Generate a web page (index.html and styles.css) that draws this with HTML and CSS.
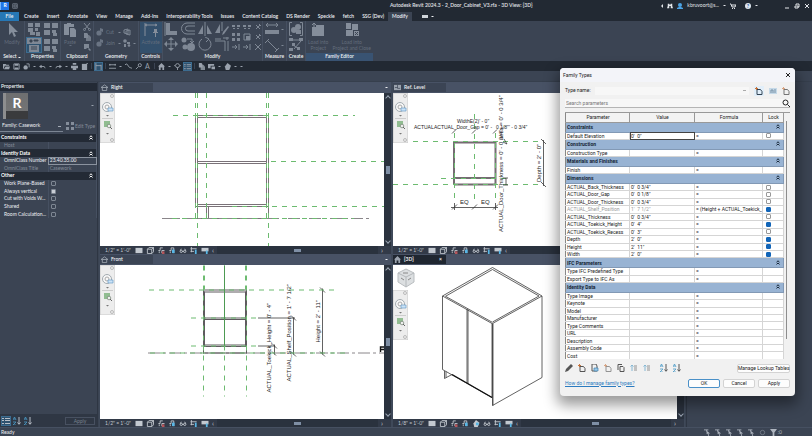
FILE: index.html
```html
<!DOCTYPE html>
<html lang="en">
<head>
<meta charset="utf-8">
<title>Autodesk Revit 2024.3</title>
<link rel="stylesheet" href="styles.css">
</head>
<body>
<svg class="sprite" aria-hidden="true">
  <symbol id="grid-a" viewBox="0 0 14 14"><path class="f" d="M1 1h5v4H1zM8 1h5v4H8zM1 6h5v4H1zM8 6h3v3H8zM3 10h5v3H3zM9 10h4v4H9z"/></symbol>
  <symbol id="grid-b" viewBox="0 0 14 14"><path class="f" d="M0 1h6v5H0zM8 1h6v5H8zM0 8h6v5H0zM8 8h4v3H8zM9 11h4v3H9z"/></symbol>
  <symbol id="props" viewBox="0 0 14 14"><path class="f" d="M0 0h14v6H0zM2 7h10v7H2z"/><path class="cut" d="M3 2h2v2H3zM7 2h4v1H7zM4 9h6M4 11h6"/></symbol>
  <symbol id="pointer" viewBox="0 0 14 14"><path class="f" d="M4 0v12l3-3 2 5 2-1-2-4h4z"/></symbol>
  <symbol id="paste" viewBox="0 0 14 14"><path class="f" d="M1 1h3V0h4v1h3v3H6v8H1zM7 5h4l2 2v7H7z"/></symbol>
  <symbol id="scissors" viewBox="0 0 8 8"><path class="s" d="M1 0l5 6M7 0L2 6"/><circle class="s" cx="1.500" cy="6.500" r="1"/><circle class="s" cx="6.500" cy="6.500" r="1"/></symbol>
  <symbol id="copy" viewBox="0 0 8 8"><path class="f" d="M1 0h3l1 1v4H1z"/><path class="f" d="M3 2h3l2 2v4H3z" opacity=".8"/></symbol>
  <symbol id="match" viewBox="0 0 8 8"><path class="f" d="M1 1h5v4H4L3 6H1zM6 5l2 2-1 1-2-2z"/></symbol>
  <symbol id="solids" viewBox="0 0 8 8"><circle class="f" cx="3" cy="5" r="2.600"/><path class="f" d="M4 0l3 1v3L4 3z"/></symbol>
  <symbol id="box" viewBox="0 0 8 8"><path class="s" d="M1 2l4-1v5L1 5zM3 3l4-1v5L3 6z"/></symbol>
  <symbol id="blobs" viewBox="0 0 8 8"><circle class="f" cx="2" cy="2" r="1.800"/><path class="f" d="M4 3h3v2H4zM1 5h2v3H1z"/><circle class="f" cx="6" cy="6.500" r="1.300"/></symbol>
  <symbol id="activate" viewBox="0 0 14 14"><path class="s" d="M1 0v13M1 2h12M3 1L1 2l2 1M11 1l2 1-2 1"/><path class="f" d="M10 6h3v3h1v1h-2v4h-1v-4H9V9h1z"/></symbol>
  <symbol id="align" viewBox="0 0 14 14"><path class="f" d="M2 1h4v8h7v4H2z"/><path class="s" d="M1 0v14"/></symbol>
  <symbol id="offset" viewBox="0 0 14 14"><path class="s" d="M14 1H6a5 5 0 0 0 0 11h8M14 4H7a2.500 2.500 0 0 0 0 5h7"/></symbol>
  <symbol id="mirror" viewBox="0 0 14 14"><path class="f" d="M5 3v9H0zM9 3v9h5z"/><path class="s" d="M7 0v14"/></symbol>
  <symbol id="mirror-draw" viewBox="0 0 14 14"><path class="f" d="M5 2v9H0zM8 10l5-6 1 1-5 7-2 1z"/><path class="s" d="M7 0v9"/></symbol>
  <symbol id="move" viewBox="0 0 14 14"><path class="s" d="M7 2v10M2 7h10"/><path class="f" d="M7 0l3 3H4zM7 14l3-3H4zM0 7l3-3v6zM14 7l-3-3v6z"/></symbol>
  <symbol id="copies" viewBox="0 0 14 14"><circle class="f" cx="3" cy="3" r="2.500"/><circle class="f" cx="4" cy="10" r="2.500"/><circle class="f" cx="10" cy="10" r="4"/><path class="s" d="M6 2h5v3M9 4l2 2 2-2"/></symbol>
  <symbol id="rotate" viewBox="0 0 14 14"><path class="s" d="M10 2a6 6 0 1 1-6 0M7 0l4 2-3 3"/></symbol>
  <symbol id="trim" viewBox="0 0 14 14"><path class="s" d="M0 4h10v10M0 2h6M13 4v10M12 0v3M8 1h6"/></symbol>
  <symbol id="split" viewBox="0 0 8 8"><path class="f" d="M0 2h3v2H0zM5 2h3v2H5zM1 5h2v1H1zM5 5h2v1H5z"/></symbol>
  <symbol id="array" viewBox="0 0 8 8"><path class="f" d="M0 0h3v3H0zM5 0h3v3H5zM0 5h3v3H0zM5 5h3v3H5z"/></symbol>
  <symbol id="scale" viewBox="0 0 8 8"><path class="s" d="M1 1h6v6H1z"/><path class="f" d="M3 3h4v4H3z"/></symbol>
  <symbol id="extend" viewBox="0 0 8 8"><path class="s" d="M0 4h5M7 1v6M3 2l2 2-2 2"/></symbol>
  <symbol id="pin" viewBox="0 0 8 8"><path class="s" d="M2 2l4 4M2 6l4-4M5 1l2 2"/></symbol>
  <symbol id="cross" viewBox="0 0 8 8"><path class="s" d="M1 1l6 6M7 1L1 7"/></symbol>
  <symbol id="ruler" viewBox="0 0 14 14"><path class="s" d="M1 2h12M3 0L1 2l2 2M11 0l2 2-2 2"/><path class="f" d="M0 7h14v4H0z"/></symbol>
  <symbol id="measure" viewBox="0 0 14 14"><path class="s" d="M3 2l9 9M0 4l4-4M10 13l4-4"/></symbol>
  <symbol id="group" viewBox="0 0 14 14"><path class="s" d="M3 .5H.5v13H3M11 .5h2.500v13H11"/><circle class="f" cx="5" cy="8" r="3"/><circle class="f" cx="9" cy="5" r="3"/><path class="f" d="M7 8h5v4H7z"/></symbol>
  <symbol id="assembly" viewBox="0 0 14 14"><path class="f" d="M0 1h4v3H0zM10 1h4v3h-4zM3 6h3v3H3zM0 11h4v3H0zM8 10h3v3H8z"/><path class="s" d="M4 3h6M12 4L5 12M4 8l6 4"/></symbol>
  <symbol id="load" viewBox="0 0 14 14"><path class="f" d="M1 4h4V2h8v11H1z"/><path class="s" d="M3 4V0M1 2l2-2 2 2"/></symbol>
  <symbol id="load-close" viewBox="0 0 14 14"><path class="f" d="M1 0h5v6H1zM7 1h6v6H7zM1 7h7v6H1zM9 8h5v5H9z"/><path class="cut" d="M10 9l3 3M13 9l-3 3"/></symbol>
  <symbol id="folder" viewBox="0 0 8 8"><path class="f" d="M0 1h3l1 1h3v1H2L1 6 0 7zM3 4h5L7 7H1z"/></symbol>
  <symbol id="save" viewBox="0 0 8 8"><path class="s" d="M1 1h6v6H1z"/><path class="f" d="M2 1h4v2H2zM2 5h4v2H2z"/></symbol>
  <symbol id="sync" viewBox="0 0 8 8"><circle class="f" cx="3" cy="5" r="2.500"/><path class="s" d="M4 1h3v4"/></symbol>
  <symbol id="window" viewBox="0 0 8 8"><path class="s" d="M1 1h6v6H1zM1 4h3M4 1v6M5 3h2M5 5h2"/></symbol>
  <symbol id="undo" viewBox="0 0 8 8"><path class="s" d="M2 4h4l1 2"/><path class="f" d="M0 4l3-2v4z"/></symbol>
  <symbol id="redo" viewBox="0 0 8 8"><path class="s" d="M6 4H2L1 6"/><path class="f" d="M8 4L5 2v4z"/></symbol>
  <symbol id="print" viewBox="0 0 8 8"><path class="f" d="M2 0h4v2H2zM0 3h8v3H0zM2 6h4v2H2z"/></symbol>
  <symbol id="sheet" viewBox="0 0 8 8"><path class="f" d="M1 1h6v7H1z"/><path class="s" d="M5 2l3-2"/></symbol>
  <symbol id="plan" viewBox="0 0 8 8"><path class="f" d="M0 1h8v6H0z"/><path d="M1 4h3M4 1v4M4 5h3" fill="none" stroke="#3b4454" stroke-width=".8"/></symbol>
  <symbol id="dimension" viewBox="0 0 8 8"><path class="s" d="M1 0v8M7 2v6M1 3h6"/></symbol>
  <symbol id="levels" viewBox="0 0 8 8"><path class="s" d="M0 2h8M0 6h8M1 1v2M7 1v2"/></symbol>
  <symbol id="zigzag" viewBox="0 0 8 8"><path class="s" d="M0 2l2-1 3 4 3 1"/></symbol>
  <symbol id="tag" viewBox="0 0 8 8"><circle class="s" cx="5.500" cy="2.500" r="1.800"/><path class="s" d="M4 4L1 7"/></symbol>
  <symbol id="house" viewBox="0 0 8 8"><path class="f" d="M4 0l4 4H7v4H5V5H3v3H1V4H0z"/></symbol>
  <symbol id="elevation" viewBox="0 0 8 8"><path class="s" d="M0 4h8L4 1zM1.500 4v3.500h5V4"/></symbol>
  <symbol id="section" viewBox="0 0 8 8"><circle class="s" cx="4" cy="3" r="2.300"/><path class="s" d="M4 5v3M0 3h1M7 3h1"/></symbol>
  <symbol id="list" viewBox="0 0 8 8"><path class="f" d="M0 1h2v1H0zM3 1h5v1H3zM0 3h2v1H0zM3 3h5v1H3zM0 6h2v1H0zM3 6h5v1H3z"/></symbol>
  <symbol id="sheetbox" viewBox="0 0 8 8"><path class="f" d="M0 1h8v6H0z"/></symbol>
  <symbol id="cube" viewBox="0 0 8 8"><path class="s" d="M1 2.500h5v5H1zM1 2.500L3 .5h5v5l-2 2M6 2.500l2-2"/></symbol>
  <symbol id="sun" viewBox="0 0 8 8"><path class="s" d="M1 4h2V1h3M2 7V5M5 7V4h3"/><path class="red" d="M5 5h3v3H5z"/></symbol>
  <symbol id="shadow" viewBox="0 0 8 8"><path class="s" d="M1 4h2V1h3v6M2 7V5"/><path class="blue" d="M4 3h3v4H4z"/></symbol>
  <symbol id="teapot" viewBox="0 0 8 8"><path class="f" d="M1 4l3-4 4 3-2 5H2z"/><path class="blue" d="M4 3h3v3H4z"/></symbol>
  <symbol id="render" viewBox="0 0 8 8"><path class="f" d="M1 4l3-4 4 3-2 5H2z"/></symbol>
  <symbol id="glasses" viewBox="0 0 8 8"><circle class="s" cx="2" cy="5" r="1.300"/><circle class="s" cx="6" cy="5" r="1.300"/><path class="s" d="M3 5h2M1 4l1-2M7 4L6 2"/></symbol>
  <symbol id="crop" viewBox="0 0 8 8"><path class="s" d="M1 0v6M0 2h7M0 5h4"/><path class="blue" d="M5 3h2v5H5z"/></symbol>
  <symbol id="reveal" viewBox="0 0 8 8"><path class="f" d="M0 1h8v4H0z"/><path class="blue" d="M5 4h2v4H5z"/></symbol>
  <symbol id="windows" viewBox="0 0 8 8"><path class="f" d="M0 1h7v2H3v3H0zM4 4h4v3H4z"/></symbol>
  <symbol id="chevrons" viewBox="0 0 4 5"><path class="s" d="M.5 2.200L2 .8l1.500 1.400M.5 4.400L2 3l1.500 1.400"/></symbol>
  <symbol id="newdoc" viewBox="0 0 8 8"><path class="s" d="M2 2.500h3.500l1.500 2v3H2z"/><path d="M0 1.500h3M1.500 0v3" fill="none" stroke="#c8743c"/></symbol>
  <symbol id="finder" viewBox="0 0 8 8"><path class="f" d="M1 1h2v1h2V1h2v3l1 3H5V4H3v3H0l1-3z"/></symbol>
  <symbol id="picker" viewBox="0 0 8 8"><path class="s" d="M0 1h5M3 1v2"/><path class="f" d="M3 2l4 3H5l1 3H5L4 5 3 6z"/></symbol>
  <symbol id="sort" viewBox="0 0 8 8"><path class="s" d="M6 0v7M4.500 5.500L6 7.300l1.500-1.800"/><path d="M0 3l1.500-3L3 3M.8 2h1.400M0 5h3L0 8h3" fill="none" stroke="#4a9ac8" stroke-width=".8"/></symbol>
  <symbol id="shift" viewBox="0 0 8 8"><path d="M2 1v6M.5 2.500L2 1l1.500 1.500" fill="none" stroke="#3f93c2"/><path class="s" d="M4 2h3M4 4h3M4 6h3"/></symbol>
  <symbol id="wheel" viewBox="0 0 15 50">
    <path d="M0 0h15v50H0z" fill="#ededed" stroke="#c9c9c9"/>
    <circle cx="12" cy="3" r="1.500" fill="none" stroke="#999" stroke-width=".6"/>
    <circle cx="7" cy="14" r="4.500" fill="#f8f8f8" stroke="#a3abb0"/>
    <circle cx="7" cy="14" r="2" fill="none" stroke="#aaa"/>
    <path d="M8 15h5v3H8z" fill="#cce3f7" stroke="#5d94c4" stroke-width=".6"/>
    <path d="M2 25.500h11" stroke="#ccc"/><path d="M6 22h3l-1.500 1.500zM6 40h3l-1.500 1.500z" fill="#777"/>
    <path d="M4 28h6v6H4z" fill="#91bd91"/><circle cx="9" cy="33" r="1.800" fill="#eee" stroke="#718071" stroke-width=".7"/><path d="M10 34l2 2" stroke="#666"/>
    <circle cx="12" cy="47" r="1.500" fill="none" stroke="#999" stroke-width=".6"/>
  </symbol>
</svg>

<header class="titlebar">
  <div class="brand"><span class="logo">R</span><svg class="i8"><use href="#window"/></svg></div>
  <h1>Autodesk Revit 2024.3 - 2_Door_Cabinet_V3.rfa - 3D View: {3D}</h1>
  <div class="account">
    <i class="caret left"></i><svg class="i6"><use href="#finder"/></svg>
    <svg class="i6 user" viewBox="0 0 6 6"><circle cx="3" cy="2" r="2"/><path d="M0 6V5l2-1h2l2 1v1z"/></svg>
    <span>kbruvoort@s...</span><i class="caret"></i>
    <svg class="i6" viewBox="0 0 6 6"><path class="s" d="M0 1h1l1 3h3l1-2H2"/><path class="f" d="M2 5h1v1H2zM4 5h1v1H4z"/></svg>
    <span class="help">?</span><i class="caret"></i>
  </div>
  <div class="winctl">
    <button aria-label="Minimize"><svg viewBox="0 0 6 6"><path d="M1 5h4"/></svg></button>
    <button aria-label="Restore"><svg viewBox="0 0 6 6"><path d="M1 3h3v2H1zM2 2V1h3v3H4"/></svg></button>
    <button aria-label="Close"><svg viewBox="0 0 6 6"><path d="M1 1l4 4M5 1L1 5"/></svg></button>
  </div>
</header>

<nav class="tabs">
  <a class="file" href="#">File</a><a href="#">Create</a><a href="#">Insert</a><a href="#">Annotate</a><a href="#">View</a><a href="#">Manage</a><a href="#">Add-Ins</a><a href="#">Interoperability Tools</a><a href="#">Issues</a><a href="#">Content Catalog</a><a href="#">DS Render</a><a href="#">Speckle</a><a href="#">fetch</a><a href="#">SSG (Dev)</a><a class="active" href="#">Modify</a>
  <span class="panel-toggle"></span><i class="caret"></i>
</nav>

<section class="ribbon">
  <div class="panel p-select"><div class="tools"><button class="big"><svg class="i14"><use href="#pointer"/></svg>Modify</button></div><h2>Select <i class="caret"></i></h2></div>
  <div class="panel p-props"><div class="tools quad"><svg class="i14"><use href="#grid-a"/></svg><svg class="i14"><use href="#grid-b"/></svg><svg class="i14 lit"><use href="#props"/></svg><svg class="i14"><use href="#grid-b"/></svg></div><h2>Properties</h2></div>
  <div class="panel p-clip"><div class="tools"><button class="big"><svg class="i14"><use href="#paste"/></svg>Paste<i class="caret"></i></button><div class="stack"><svg class="i8"><use href="#scissors"/></svg><svg class="i8"><use href="#copy"/></svg><svg class="i8"><use href="#match"/></svg></div></div><h2>Clipboard</h2></div>
  <div class="panel p-geom"><div class="tools geom">
    <button><svg class="i8"><use href="#solids"/></svg>Cut</button><i class="caret"></i><svg class="i8"><use href="#box"/></svg><span></span>
    <button><svg class="i8"><use href="#solids"/></svg>Join</button><i class="caret"></i><svg class="i8"><use href="#blobs"/></svg><i class="caret"></i>
  </div><h2>Geometry</h2></div>
  <div class="panel p-ctrl"><div class="tools"><button class="big on"><svg class="i14"><use href="#activate"/></svg>Activate</button></div><h2>Controls</h2></div>
  <div class="panel p-modify"><div class="tools"><div class="eight"><svg class="i14"><use href="#align"/></svg><svg class="i14"><use href="#offset"/></svg><svg class="i14"><use href="#mirror"/></svg><svg class="i14"><use href="#mirror-draw"/></svg><svg class="i14"><use href="#move"/></svg><svg class="i14"><use href="#copies"/></svg><svg class="i14"><use href="#rotate"/></svg><svg class="i14"><use href="#trim"/></svg></div>
    <div class="nine"><svg class="i8"><use href="#split"/></svg><svg class="i8"><use href="#split"/></svg><svg class="i8"><use href="#pin"/></svg><svg class="i8"><use href="#array"/></svg><svg class="i8"><use href="#scale"/></svg><svg class="i8"><use href="#pin"/></svg><svg class="i8"><use href="#extend"/></svg><svg class="i8"><use href="#extend"/></svg><svg class="i8"><use href="#cross"/></svg></div></div><h2>Modify</h2></div>
  <div class="panel p-measure"><div class="tools pairs"><svg class="i14"><use href="#ruler"/></svg><i class="caret"></i><svg class="i14"><use href="#measure"/></svg><i class="caret"></i></div><h2>Measure</h2></div>
  <div class="panel p-create"><div class="tools stack wide"><svg class="i14"><use href="#group"/></svg><svg class="i14"><use href="#assembly"/></svg></div><h2>Create</h2></div>
  <div class="panel p-family"><div class="tools"><button class="big"><svg class="i14"><use href="#load"/></svg>Load into<br>Project</button><button class="big"><svg class="i14"><use href="#load-close"/></svg>Load into<br>Project and Close</button></div><h2>Family Editor</h2></div>
</section>

<div class="quick">
  <svg class="i8"><use href="#folder"/></svg><svg class="i8"><use href="#save"/></svg><svg class="i8"><use href="#sync"/></svg><i class="caret"></i><svg class="i8"><use href="#undo"/></svg><i class="caret"></i><svg class="i8"><use href="#redo"/></svg><i class="caret"></i><svg class="i8"><use href="#print"/></svg><svg class="i8"><use href="#sheet"/></svg><span class="sep"></span><svg class="i8 lit"><use href="#dimension"/></svg><span class="sep"></span><svg class="i8"><use href="#levels"/></svg><i class="caret"></i><svg class="i8"><use href="#zigzag"/></svg><svg class="i8"><use href="#tag"/></svg><b>A</b><span class="sep"></span><svg class="i8"><use href="#house"/></svg><i class="caret"></i><svg class="i8"><use href="#section"/></svg><svg class="i8 lit"><use href="#list"/></svg><span class="sep"></span><svg class="i8"><use href="#copy"/></svg><svg class="i8"><use href="#windows"/></svg><i class="caret"></i><svg class="i8"><use href="#render"/></svg><i class="caret"></i><i class="caret"></i>
</div>
<div class="options"></div>

<main class="work">
  <aside class="props">
    <h2>Properties</h2>
    <div class="preview"><span class="family">R</span><i class="caret"></i></div>
    <div class="chooser">
      <select aria-label="Family"><option>Family: Casework</option></select>
      <button><svg class="i8"><use href="#array"/></svg>Edit Type</button>
    </div>
    <table>
      <tr class="g"><th colspan="2">Constraints<svg><use href="#chevrons"/></svg></th></tr>
      <tr class="dim"><td>Host</td><td></td></tr>
      <tr class="g"><th colspan="2">Identity Data<svg><use href="#chevrons"/></svg></th></tr>
      <tr><td>OmniClass Number</td><td class="edit">23.40.35.00</td></tr>
      <tr class="dim"><td>OmniClass Title</td><td>Casework</td></tr>
      <tr class="g"><th colspan="2">Other<svg><use href="#chevrons"/></svg></th></tr>
      <tr><td><label for="w1">Work Plane-Based</label></td><td><input type="checkbox" id="w1"></td></tr>
      <tr><td><label for="w2">Always vertical</label></td><td><input type="checkbox" id="w2" checked></td></tr>
      <tr><td><label for="w3">Cut with Voids W...</label></td><td><input type="checkbox" id="w3"></td></tr>
      <tr><td><label for="w4">Shared</label></td><td><input type="checkbox" id="w4"></td></tr>
      <tr><td><label for="w5">Room Calculation...</label></td><td><input type="checkbox" id="w5"></td></tr>
    </table>
    <div class="apply"><svg class="i8 lit"><use href="#list"/></svg><svg class="i8"><use href="#sort"/></svg><svg class="i8"><use href="#sort"/></svg><button disabled>Apply</button></div>
  </aside>

  <div class="views">
    <section class="view">
      <header><span class="tab"><svg class="i8"><use href="#elevation"/></svg>Right</span><i class="caret"></i></header>
      <div class="canvas">
        <svg class="draw" viewBox="100 93 284 153">
          <g class="gray"><path d="M195.500 115v92M197.500 117v101.500M266.500 117v89M268.500 115v103.500M195 115.500h74M197 117.500h70M198 161.500h69M198 163.500h69M197 204.500h70M195 206.500h74M206.500 207v11.500M208.500 207v11.500M197 218.500h72"/></g>
          <path class="gray ground" d="M162 218.500h208"/>
          <g class="ref"><path d="M195.500 93v125M197.500 93v153M206.500 93v125M266.500 93v125M268.500 93v153M173 115.500h182M271 161.500h113M232 206.500h152M172 218.500h182"/></g>
        </svg>
        <svg class="nav"><use href="#wheel"/></svg>
      </div>
      <div class="vscroll"></div>
      <footer><span>1/2" = 1'-0"</span><svg class="i8"><use href="#sheetbox"/></svg><svg class="i8"><use href="#cube"/></svg><svg class="i8"><use href="#sun"/></svg><svg class="i8"><use href="#shadow"/></svg><svg class="i8"><use href="#glasses"/></svg><svg class="i8"><use href="#crop"/></svg><svg class="i8"><use href="#reveal"/></svg><em>‹</em><div class="hscroll"></div><em>›</em></footer>
    </section>

    <section class="view">
      <header><span class="tab"><svg class="i8"><use href="#plan"/></svg>Ref. Level</span></header>
      <div class="canvas">
        <svg class="draw" viewBox="393 93 284 153">
          <g class="gray thick"><path d="M454 142v43M495.500 142v43M453 142.500h43.500M454 178h42M454 184.500h42"/></g>
          <g class="ref"><path d="M393 141.500h150M393 184.500h150M441 178.500h68M454.500 133v67M474.500 114v89M495.500 133v67"/></g>
          <g class="line"><path d="M451 207.500h47M452 209.500l5-5M472 209.500l5-5M493 209.500l5-5M454.500 203v7M495.500 203v7M452 133.500l4-4M472 133.500l4-4M493 133.500l4-4M543.500 140v46M541 139l5 5M541 182l5 5M503 142l4 2M504 139l3 5M503 178h5M503 185h5M506 178v7"/></g>
          <g class="note"><text class="small" x="457" y="123">WidthE(2)' - 0"</text><text class="small" x="414" y="129">ACTUAL</text><text class="small" x="434" y="129">ACTUAL_Door_Gap = 0' -</text><text class="small" x="496" y="129">0 1/8"' - 0 3/4"</text><text x="460" y="204">EQ</text><text x="481" y="204">EQ</text>
          <text transform="translate(503 232) rotate(-90)">ACTUAL_Door_Thickness = 0' - 0 3/4"</text><text transform="translate(503 140) rotate(-90)">ness = 0' - 0 3/4"</text><text transform="translate(541 182) rotate(-90)">Depth = 2' - 0"</text></g>
        </svg>
        <svg class="nav"><use href="#wheel"/></svg>
      </div>
      <div class="vscroll"></div>
      <footer><span>1/2" = 1'-0"</span><svg class="i8"><use href="#sheetbox"/></svg><svg class="i8"><use href="#cube"/></svg><svg class="i8"><use href="#sun"/></svg><svg class="i8"><use href="#shadow"/></svg><svg class="i8"><use href="#glasses"/></svg><svg class="i8"><use href="#crop"/></svg><svg class="i8"><use href="#reveal"/></svg><em>‹</em><div class="hscroll"></div><em>›</em></footer>
    </section>

    <div class="empty"></div>

    <section class="view">
      <header><span class="tab"><svg class="i8"><use href="#elevation"/></svg>Front</span><i class="caret"></i></header>
      <div class="canvas">
        <svg class="draw" viewBox="100 265 284 153">
          <path class="gray ground" d="M148 352.500h236"/>
          <g class="gray dark"><path d="M203.500 289v64M204.500 291v55M245.500 291v55M246.500 289v64M203 289.500h44M204 291.500h42M204 317.500h42M204 319h42M204 344.500h42M204 346h42M203 352.500h44"/></g>
          <g class="line"><path d="M224.500 290v55M258 317.500h37M258 345.500h17M274.500 344v10M293.500 317v37M322.500 288v66M272 343l5 5M272 351l4 4M291 315l5 5M291 351l5 5M320 287l5 5M320 351l5 5"/></g>
          <g class="ref"><path d="M203.500 265v131M204.500 265v24M224.500 265v131M245.500 265v24M246.500 265v131M149 289.500h187M191 317.500h67M191 345.500h67M150 352.500h200"/></g>
          <path class="ref solid" d="M224.500 265v80"/>
          <g class="note"><text transform="translate(271 392) rotate(-90)">ACTUAL_Toekick_Height = 0' - 4"</text><text transform="translate(291 381) rotate(-90)">ACTUAL_Shelf_Position = 1' - 7 1/2"</text><text transform="translate(320 342) rotate(-90)">Height = 2' - 11"</text></g>
          <path class="line bold" d="M384 346.500h-3.500v5M381 349h3"/>
        </svg>
        <svg class="nav"><use href="#wheel"/></svg>
      </div>
      <div class="vscroll"></div>
      <footer><span>1/2" = 1'-0"</span><svg class="i8"><use href="#sheetbox"/></svg><svg class="i8"><use href="#cube"/></svg><svg class="i8"><use href="#sun"/></svg><svg class="i8"><use href="#shadow"/></svg><svg class="i8"><use href="#glasses"/></svg><svg class="i8"><use href="#crop"/></svg><svg class="i8"><use href="#reveal"/></svg><em>‹</em><div class="hscroll"></div><em>›</em></footer>
    </section>

    <section class="view">
      <header><span class="tab current"><svg class="i8"><use href="#house"/></svg>{3D}<small>×</small></span></header>
      <div class="canvas">
        <svg class="draw" viewBox="393 265 284 153">
          <g class="line"><path d="M492.500 267L442.500 295.500V369L492 397V323L442.500 295.500M492.500 267l49.500 28.500V377l-49.500 28V323l49.500-27.500M492.500 269l-47 26.800 46.800 26M492.500 269l46.500 26.500-46.500 26M467 308.500v74M468 309v74M493 323v82M444.500 370.500v7.500l7.500-4M446 371v6"/></g>
          <path class="line bold" d="M452 374l40 23"/>
        </svg>
        <svg class="viewcube" viewBox="0 0 18 20"><path d="M9 1l8 4v9l-8 5-8-5V5z" fill="#dcdfe1" stroke="#b9bdc0"/><path d="M1 5l8 4 8-4M9 9v10" fill="none" stroke="#b4b8bb"/><path d="M4 10l3 2M11 12l3-2M6 5h5" stroke="#888"/></svg>
        <svg class="nav low"><use href="#wheel"/></svg>
      </div>
      <div class="vscroll"></div>
      <footer><span>1/8" = 1'-0"</span><svg class="i8"><use href="#sheetbox"/></svg><svg class="i8"><use href="#cube"/></svg><svg class="i8"><use href="#sun"/></svg><svg class="i8"><use href="#shadow"/></svg><svg class="i8"><use href="#teapot"/></svg><svg class="i8"><use href="#glasses"/></svg><svg class="i8"><use href="#crop"/></svg><svg class="i8"><use href="#reveal"/></svg><em>‹</em><div class="hscroll"></div><em>›</em></footer>
    </section>
    <div class="empty"></div>
  </div>
</main>

<footer class="status"><span>Ready</span><div><svg class="i8"><use href="#picker"/></svg><svg class="i8"><use href="#picker"/></svg><svg class="i8"><use href="#picker"/></svg><svg class="i8"><use href="#picker"/></svg><svg class="i8"><use href="#picker"/></svg><svg class="i8 faint" viewBox="0 0 8 8"><circle class="s" cx="4" cy="4" r="2.500"/></svg><svg class="i8" viewBox="0 0 8 8"><path class="f" d="M0 0h8L5 4v4H3V4z"/></svg><small>:0</small></div></footer>

<div class="dialog" role="dialog" aria-labelledby="dt">
  <header><h2 id="dt">Family Types</h2><button aria-label="Close"><svg viewBox="0 0 6 6"><path d="M1 1l4 4M5 1L1 5"/></svg></button></header>
  <div class="typename"><label for="tn">Type name:</label><select id="tn"><option></option></select><button class="new" aria-label="New type"><svg class="i8"><use href="#newdoc"/></svg></button><svg class="i8" viewBox="0 0 8 8"><path d="M0 1h8v6H0z" fill="#c5d9e8"/><path d="M2 6V3h2v3M6 2v4" fill="none" stroke="#7891a6"/></svg><svg class="i8 pale"><use href="#newdoc"/></svg></div>
  <div class="search"><input type="text" placeholder="Search parameters" aria-label="Search parameters"><svg class="i8" viewBox="0 0 8 8"><circle class="s" cx="3.500" cy="3.500" r="2.500"/><path class="s" d="M5.500 5.500L8 8"/></svg></div>
  <div class="grid">
    <table>
      <colgroup><col class="c1"><col class="c2"><col class="c3"><col class="c4"></colgroup>
      <thead><tr><th>Parameter</th><th>Value</th><th>Formula</th><th>Lock</th></tr></thead>
      <tbody>
      <tr class="g"><th colspan="4">Constraints<svg><use href="#chevrons"/></svg></th></tr>
      <tr><td>Default Elevation</td><td class="edit">0'&nbsp; 0"</td><td>=</td><td><input type="checkbox" aria-label="Lock"></td></tr>
      <tr class="g"><th colspan="4">Construction<svg><use href="#chevrons"/></svg></th></tr>
      <tr><td>Construction Type</td><td></td><td>=</td><td></td></tr>
      <tr class="g"><th colspan="4">Materials and Finishes<svg><use href="#chevrons"/></svg></th></tr>
      <tr><td>Finish</td><td></td><td>=</td><td></td></tr>
      <tr class="g"><th colspan="4">Dimensions<svg><use href="#chevrons"/></svg></th></tr>
      <tr><td>ACTUAL_Back_Thickness</td><td>0'&nbsp; 0 3/4"</td><td>=</td><td><input type="checkbox" aria-label="Lock"></td></tr>
      <tr><td>ACTUAL_Door_Gap</td><td>0'&nbsp; 0 1/8"</td><td>=</td><td><input type="checkbox" aria-label="Lock"></td></tr>
      <tr><td>ACTUAL_Door_Thickness</td><td>0'&nbsp; 0 3/4"</td><td>=</td><td><input type="checkbox" aria-label="Lock"></td></tr>
      <tr><td class="off">ACTUAL_Shelf_Position</td><td class="off">1'&nbsp; 7 1/2"</td><td>= (Height + ACTUAL_Toekick_</td><td><input type="checkbox" aria-label="Lock" checked></td></tr>
      <tr><td>ACTUAL_Thickness</td><td>0'&nbsp; 0 3/4"</td><td>=</td><td><input type="checkbox" aria-label="Lock"></td></tr>
      <tr><td>ACTUAL_Toekick_Height</td><td>0'&nbsp; 4"</td><td>=</td><td><input type="checkbox" aria-label="Lock" checked></td></tr>
      <tr><td>ACTUAL_Toekick_Recess</td><td>0'&nbsp; 3"</td><td>=</td><td><input type="checkbox" aria-label="Lock"></td></tr>
      <tr><td>Depth</td><td>2'&nbsp; 0"</td><td>=</td><td><input type="checkbox" aria-label="Lock" checked></td></tr>
      <tr><td>Height</td><td>2'&nbsp; 11"</td><td>=</td><td><input type="checkbox" aria-label="Lock" checked></td></tr>
      <tr><td>Width</td><td>2'&nbsp; 0"</td><td>=</td><td><input type="checkbox" aria-label="Lock" checked></td></tr>
      <tr class="g"><th colspan="4">IFC Parameters<svg><use href="#chevrons"/></svg></th></tr>
      <tr><td>Type IFC Predefined Type</td><td></td><td>=</td><td></td></tr>
      <tr><td>Export Type to IFC As</td><td></td><td>=</td><td></td></tr>
      <tr class="g"><th colspan="4">Identity Data<svg><use href="#chevrons"/></svg></th></tr>
      <tr><td>Type Image</td><td></td><td>=</td><td></td></tr>
      <tr><td>Keynote</td><td></td><td>=</td><td></td></tr>
      <tr><td>Model</td><td></td><td>=</td><td></td></tr>
      <tr><td>Manufacturer</td><td></td><td>=</td><td></td></tr>
      <tr><td>Type Comments</td><td></td><td>=</td><td></td></tr>
      <tr><td>URL</td><td></td><td>=</td><td></td></tr>
      <tr><td>Description</td><td></td><td>=</td><td></td></tr>
      <tr><td>Assembly Code</td><td></td><td>=</td><td></td></tr>
      <tr><td>Cost</td><td></td><td>=</td><td></td></tr>
      </tbody>
    </table>
    <div class="thumb"></div>
  </div>
  <div class="tools2">
    <svg class="i8" viewBox="0 0 8 8"><path class="f" d="M1 5l5-5 2 2-5 5-3 1z"/></svg><svg class="i8"><use href="#newdoc"/></svg><svg class="i8" viewBox="0 0 8 8"><path class="s" d="M1 0h4l1 2v5H1z"/><path d="M3 4h4v3H3z" fill="#9dcbea" stroke="#3e7fae" stroke-width=".7"/></svg><svg class="i8 pale"><use href="#newdoc"/></svg><svg class="i8" viewBox="0 0 8 8"><path class="s" d="M1 6V.5h4M3 2.500h3l1 1v4H3z"/></svg><svg class="i8 pale"><use href="#shift"/></svg><svg class="i8 pale"><use href="#shift"/></svg><svg class="i8 apart"><use href="#sort"/></svg><svg class="i8"><use href="#sort"/></svg>
    <button>Manage Lookup Tables</button>
  </div>
  <div class="actions"><a href="#">How do I manage family types?</a><button class="ok">OK</button><button>Cancel</button><button>Apply</button></div>
</div>
</body>
</html>
```
FILE: styles.css
```css
* { box-sizing: border-box; }
body {
  margin: 0; height: 100vh; display: flex; flex-direction: column; overflow: hidden;
  background: #3b4453; color: #eef0f3; font: 5px/7px Lato, "Open Sans", sans-serif;
}
h1, h2 { margin: 0; font: inherit; }
a { color: inherit; text-decoration: none; }
button, input, select { font: inherit; color: inherit; margin: 0; padding: 0; border: 0; background: none; border-radius: 0; }
select { appearance: none; }
svg { display: block; flex: none; }
.sprite { display: none; }
.f { fill: currentColor; }
.s { fill: none; stroke: currentColor; stroke-width: 1; }
.cut { fill: #3b4453; stroke: #3b4453; }
.red { fill: #b5565b; }
.blue { fill: #58b7e6; }
.i14 { width: 14px; height: 14px; }
.i8 { width: 8px; height: 8px; }
.i6 { width: 6px; height: 6px; }
.caret { display: inline-block; flex: none; border: 1px solid transparent; border-top-color: currentColor; border-bottom: 0; width: 3px; height: 1px; }
.caret.left { border: 2px solid transparent; border-right-color: currentColor; border-left: 0; width: 2px; height: 4px; }

.titlebar { flex: none; height: 11px; background: #222933; display: grid; grid-template-columns: 390px 1fr auto auto; align-items: center; color: #e3e6ea; }
.titlebar h1 { font-weight: 600; }
.brand { display: flex; align-items: center; gap: 3px; }
.brand .i8 { width: 6px; height: 6px; color: #7f8895; }
.logo { width: 9px; height: 8px; background: #2176e8; color: #fff; font-weight: 700; text-align: center; border-left: 1px solid #75b4fb; }
.account { display: flex; align-items: center; gap: 4px; margin-right: 26px; }
.user { fill: #4ba3e6; }
.help { width: 6px; height: 6px; line-height: 6px; border-radius: 3px; background: #dfe7f0; color: #24569a; text-align: center; font-weight: 700; margin-left: 5px; }
.winctl { display: flex; gap: 4px; padding-right: 2px; }
.winctl svg, .dialog header svg { width: 6px; height: 6px; fill: none; stroke: currentColor; }

.tabs { flex: none; height: 10px; background: #222933; display: flex; align-items: center; font-weight: 600; }
.tabs a { padding: 0 4px; line-height: 9px; height: 9px; white-space: nowrap; }
.tabs .file { background: #2677b5; width: 19px; margin-right: 1px; text-align: center; }
.tabs .active { background: #3b4453; }
.panel-toggle { width: 6px; height: 3px; background: #cfd4da; margin: 0 3px 0 10px; }

.ribbon { flex: none; height: 40px; display: flex; color: #7f8895; }
.panel { display: flex; flex-direction: column; border-right: 1px solid #465061; }
.panel h2 { height: 8px; line-height: 7px; text-align: center; color: #eef0f3; font-weight: 600; white-space: nowrap; }
.tools { flex: 1; display: flex; justify-content: center; padding-top: 1px; }
.big { display: flex; flex-direction: column; align-items: center; line-height: 6px; white-space: nowrap; color: #636d7c; padding-top: 1px; }
.big svg { color: #858e9b; margin-bottom: 2px; }
.on { background: #34506c; width: 22px; }
.lit { background: #2f526f; outline: 1px solid #3c6c90; }
.p-select { width: 25px; } .p-props { width: 36px; } .p-clip { width: 33px; } .p-geom { width: 45px; } .p-ctrl { width: 24px; }
.p-modify { width: 100px; } .p-measure { width: 24px; } .p-create { width: 19px; }
.p-family { width: 67px; border: 0; } .p-family h2 { background: #395372; }
.p-family .tools { justify-content: space-around; }
.quad { display: grid; grid-template-columns: 14px 14px; gap: 1px 3px; }
.stack { display: flex; flex-direction: column; gap: 2px; justify-content: flex-start; }
.p-clip .tools { gap: 6px; }
.p-clip .stack { padding-top: 1px; }
.wide { align-items: center; gap: 1px; }
.geom { display: grid; grid-template-columns: 20px 3px 8px 3px; gap: 3px 2px; align-content: center; align-items: center; }
.geom button { display: flex; gap: 2px; align-items: center; color: #6a7483; }
.p-modify .tools { gap: 3px; }
.eight { display: grid; grid-template-columns: repeat(4, 14px); gap: 1px 3px; align-content: start; }
.nine { display: grid; grid-template-columns: repeat(3, 8px); gap: 2px 3px; align-content: start; padding-top: 1px; }
.pairs { display: grid; grid-template-columns: 14px 3px; gap: 1px 2px; align-items: center; }

.quick { flex: none; height: 10px; background: #222933; display: flex; align-items: center; gap: 3px; padding-left: 3px; color: #9aa2ad; }
.quick .i8 { width: 7px; height: 7px; }
.quick b { font-size: 7px; font-weight: 400; width: 6px; }
.quick .sep { width: 1px; height: 6px; background: #3b4453; }
.options { flex: none; height: 11px; border-bottom: 1px solid #363f4d; }

.work { flex: 1; min-height: 0; display: flex; }
.props { width: 98px; flex: none; display: flex; flex-direction: column; border-right: 1px solid #2e3643; margin-right: 1px; padding-top: 1px; }
.props h2 { height: 8px; background: #232a35; padding-left: 1px; font-weight: 600; }
.preview { display: flex; align-items: center; justify-content: space-between; height: 29px; padding: 0 3px; color: #9aa2ad; }
.family { width: 25px; height: 26px; background: linear-gradient(#6e6f70, #737475 70%, #3a3b3d 70%); border-left: 3px solid #8d8e8f; color: #fff; font-size: 14px; line-height: 19px; font-weight: 700; text-align: center; }
.chooser { display: flex; align-items: center; height: 12px; gap: 3px; margin-bottom: 2px; }
.chooser select { width: 63px; height: 11px; padding-left: 2px; border-bottom: 1px solid #7b8593; background: linear-gradient(#a5adb7, #a5adb7) no-repeat 58px 5px / 3px 1px; }
.chooser button { display: flex; align-items: center; gap: 1px; color: #848d9a; }
.props table { width: 97px; height: 84px; border-collapse: collapse; table-layout: fixed; }
.props td, .props th { padding: 0 0 0 4px; text-align: left; line-height: 7px; white-space: nowrap; font-weight: 400; border: 0 solid #465061; border-width: 0 1px 0 0; }
.props th { background: #232a35; padding-left: 1px; font-weight: 700; color: #fff; }
.props td + td { padding-left: 1px; }
.props .dim td { color: #848d9a; }
.props td.edit { outline: 1px solid #8b939f; outline-offset: -1px; }
th svg { width: 4px; height: 5px; float: right; margin: 1px 3px 0 0; }
input[type=checkbox] { appearance: none; display: block; width: 5px; height: 5px; border: 1px solid #7e8793; border-radius: 1px; }
.props input { margin-left: 1px; }
.props input:checked { background: #c8cdd4; }
.apply { margin-top: auto; height: 13px; display: flex; align-items: center; gap: 3px; padding: 0 2px; background: #2f3744; color: #b9bfc8; }
.apply button { margin-left: auto; width: 30px; height: 8px; line-height: 6px; border: 1px solid #485161; color: #79828f; }

.views { flex: 1; min-width: 0; display: grid; grid-template: 172px 1fr / 293fr 293fr 127fr; }
.view { padding: 0 1px; display: grid; grid-template: 11px 1fr 8px / 1fr 7px; min-width: 0; min-height: 0; background: #3f4959; }
.view header { grid-column: 1 / 3; display: flex; justify-content: space-between; align-items: center; background: #485265; padding-right: 3px; font-weight: 600; }
.tab { width: 53px; height: 9px; display: flex; align-items: center; gap: 3px; padding-left: 1px; background: #3b4454; }
.tab svg { color: #9aa2ad; width: 7px; height: 7px; }
.current { background: #1f2630; font-weight: 700; }
.current small { margin: 0 4px 0 auto; font-size: 5px; }
.canvas { background: #fff; position: relative; overflow: hidden; min-height: 0; }
.draw { width: 100%; height: 100%; }
.nav { position: absolute; left: 0; top: 0; width: 15px; height: 50px; }
.nav.low { top: 25px; }
.viewcube { position: absolute; left: 4px; top: 3px; width: 18px; height: 20px; }
.vscroll { display: flex; flex-direction: column; justify-content: space-between; align-items: center; padding: 3px 0; background: linear-gradient(#7f8fa5, #7f8fa5) no-repeat center / 4px 8px #2a323e; }
.vscroll::before, .vscroll::after { content: ""; width: 3px; height: 3px; border: solid #9aa4b2; border-width: 1px 0 0 1px; transform: rotate(45deg); }
.vscroll::after { transform: rotate(225deg); }
.view footer { grid-column: 1 / 3; display: flex; align-items: center; gap: 3px; padding: 0 8px 0 5px; background: #323a48; color: #c3c9d0; }
.view footer span { width: 27px; white-space: nowrap; }
.view footer svg { height: 7px; }
.view footer em { font-style: normal; font-size: 7px; }
.hscroll { flex: 1; height: 100%; background: linear-gradient(#7f8fa5, #7f8fa5) no-repeat center / 7px 3px #2a323e; }
.empty { border-left: 1px solid #2e3643; margin-left: 1px; }

.gray { fill: none; stroke: #7a7278; }
.gray.dark { stroke: #5f5b5f; }
.gray.thick { stroke: #756b72; stroke-width: 2; }
.ref { fill: none; stroke: #6dbb70; stroke-width: 1; stroke-dasharray: 5 5; }
.ref.solid { stroke: #4d9a52; stroke-dasharray: none; }
.gray.ground { stroke: #8a868a; stroke-dasharray: 12 3 3 3; }
.line { fill: none; stroke: #3b3b3b; stroke-width: .8; }
.line.bold { stroke: #111; stroke-width: 1.4; }
.note { font: 6px "Liberation Sans", sans-serif; fill: #222; }
.note .small { font-size: 5px; }

.status { flex: none; height: 9px; display: flex; justify-content: space-between; align-items: center; padding: 0 30px 0 1px; border-top: 1px solid #465061; }
.status div { display: flex; gap: 4px; align-items: center; color: #aeb5bf; }
.status svg { width: 7px; height: 7px; }
.status small { font-size: 5px; margin-left: -3px; }
.faint { opacity: .5; }

.dialog { position: absolute; right: 17px; top: 68px; width: 235px; height: 328px; background: #f1f1f1; color: #222; border-radius: 4px; box-shadow: 0 6px 14px 3px rgba(0, 0, 0, .4); padding: 0 5px; display: flex; flex-direction: column; font-family: Roboto, "Open Sans", sans-serif; }
.dialog header { height: 14px; display: flex; align-items: center; justify-content: space-between; background: #f3f4f9; margin: 0 -5px; padding: 0 4px 0 3px; border-radius: 4px 4px 0 0; }
.typename { height: 17px; display: flex; align-items: center; gap: 5px; }
.typename label { width: 25px; white-space: nowrap; }
.typename select { flex: 1; height: 8px; background: linear-gradient(#aaa, #aaa) no-repeat right 3px center / 3px 1px #f7f7f7; }
.new { background: #e2effa; width: 10px; height: 10px; padding: 1px; }
.typename .new svg { color: #345; }
.pale { opacity: .6; }
.search { height: 9px; display: flex; align-items: center; border-bottom: 1px solid #b5b5b5; margin-bottom: 4px; background: #f7f7f7; }
.search input { flex: 1; min-width: 0; height: 8px; padding-left: 1px; }
.search input::placeholder { color: #777; opacity: 1; }
.grid { height: 247px; display: flex; justify-content: space-between; border-top: 1px solid #999; overflow: hidden; }
.grid table { width: 218px; height: 247px; table-layout: fixed; border-collapse: collapse; background: #fff; border-left: 1px solid #888; }
.c1 { width: 64px; } .c2 { width: 65px; } .c3 { width: 68px; } .c4 { width: 21px; }
.grid td, .grid th { padding: 0 0 0 1px; line-height: 6px; white-space: nowrap; overflow: hidden; border: solid #d5d5d5; border-width: 0 1px 1px 0; text-align: left; font-weight: 400; }
.grid thead th { text-align: center; background: #f3f3f3; line-height: 9px; border-color: #999; }
.grid .g th { background: #98b3d3; border-color: #8299b5; font-weight: 700; color: #152535; line-height: 8px; }
.grid td.edit { outline: 1px solid #444; outline-offset: -1px; }
.grid .off { color: #999; }
.grid input { margin: 0 0 0 2px; border-color: #999; }
.grid input:checked { background: #1265b8; border-color: #1265b8; }
.thumb { width: 1px; margin: 8px 3px 20px 0; background: #8d8d8d; }
.tools2 { height: 18px; display: flex; align-items: center; gap: 5px; color: #555; }
.apart { margin-left: 4px; }
.dialog .tools2 button, .actions button { background: #fdfdfd; border: 1px solid #d3d3d3; border-radius: 2px; height: 9px; line-height: 7px; color: #222; }
.dialog .tools2 button { margin-left: auto; width: 53px; white-space: nowrap; }
.actions { display: flex; align-items: center; gap: 3px; height: 12px; }
.actions a { color: #2b7bc0; text-decoration: underline; margin-right: auto; }
.actions button { width: 32px; }
.actions .ok { border-color: #4a90c8; }
```
